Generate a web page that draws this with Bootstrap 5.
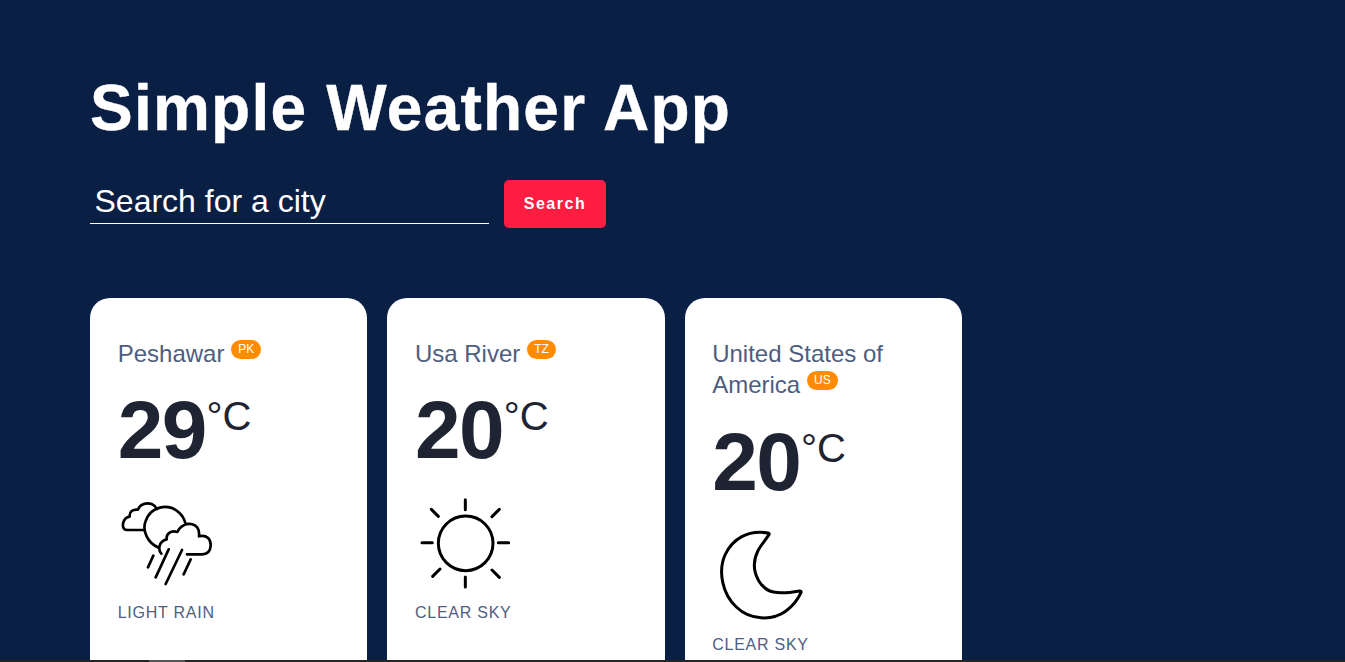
<!DOCTYPE html>
<html lang="en">
<head>
<meta charset="utf-8">
<meta name="viewport" content="width=device-width, initial-scale=1">
<title>Simple Weather App</title>
<link href="https://cdn.jsdelivr.net/npm/bootstrap@5.3.0/dist/css/bootstrap.min.css" rel="stylesheet">
<style>
body{background:#0a1f44;font-family:"Liberation Sans",Arial,sans-serif;line-height:1.3;color:#fff}
.page{width:1169px;margin-left:90px;padding-top:67px}
.heading{font-size:64px;line-height:83px;letter-spacing:1.24px;margin-bottom:30px;-webkit-text-stroke:.4px #fff}
.city-input{width:399px;height:44px;font-size:32px;line-height:36px;padding:3px 4.5px 4px;background:transparent;border:0;border-bottom:1px solid #fff;border-radius:0;color:#fff;outline:0}
.city-input::placeholder{color:#fff;opacity:1}
.search-btn{width:102px;height:48px;padding:0;margin-left:15px;background:#ff1e42;border:0;border-radius:5px;letter-spacing:1.55px;font-size:16px;line-height:18px}
.cities{display:grid;grid-template-columns:repeat(4,1fr);gap:20px;margin-top:70px}
.city{background:#fff;border-radius:20px;padding:40px 27.7px;height:440px}
.city-name{font-size:24px;line-height:31.2px;color:#4e5d80;margin:0}
.city-name sup{display:inline-block;font-size:12px;line-height:14.4px;top:-9px;padding:2.4px 7.2px;border-radius:30px;background:#ff8c00;color:#fff;margin:-10px 0}
.city-temp{font-size:82px;line-height:104px;letter-spacing:-1.5px;font-weight:700;color:#1e2432;margin-top:9px}
.city-temp sup{font-size:40px;font-weight:400;letter-spacing:0;top:-28px;margin-left:.5px}
.city svg{display:block;width:100px;height:100px;margin-top:11px;fill:none;stroke:#000;stroke-width:9;stroke-linecap:round;stroke-linejoin:round}
.city .rain-icon{stroke-width:8}
.city figcaption{font-size:16px;line-height:21px;letter-spacing:.75px;color:#4e5d80;margin-top:9px}
.city-tall .city-temp{margin-top:10px}
.taskbar{height:2px;background:#242424}
.taskbar span{display:block;width:36px;height:2px;margin-left:149px;background:#555}
</style>
</head>
<body class="vh-100 overflow-hidden d-flex flex-column">
<main class="flex-grow-1 overflow-hidden">
<div class="page">
<h1 class="heading fw-bold">Simple Weather App</h1>
<form class="d-flex align-items-start" onsubmit="return false">
<input class="city-input" type="text" placeholder="Search for a city">
<button class="search-btn btn btn-danger fw-bold" type="submit">Search</button>
</form>
<section class="cities">
<article class="city">
<h2 class="city-name fw-normal">Peshawar <sup>PK</sup></h2>
<div class="city-temp">29<sup>°C</sup></div>
<figure class="m-0">
<svg class="rain-icon" viewBox="25 9 300 300"><path d="M104 120H52C38 120 39 104 41 97Q45 83 60 80C58 65 70 57 85 59C91 41 111 37 126 42Q137 47 142 57M147 173C112 158 97 120 108 93C122 50 175 38 207 67Q222 80 227 99M155 191C145 180 146 154 171 148C169 132 183 120 203 126C212 107 232 98 248 103C264 108 270 121 268 139C291 133 304 147 303 167C302 186 293 193 277 193H232M131 197L115 232M177 178L138 262M217 180L168 282M243 208L222 253"/></svg>
<figcaption>LIGHT RAIN</figcaption>
</figure>
</article>
<article class="city">
<h2 class="city-name fw-normal">Usa River <sup>TZ</sup></h2>
<div class="city-temp">20<sup>°C</sup></div>
<figure class="m-0">
<svg viewBox="15 8 300 300"><circle cx="167" cy="159" r="82"/><path d="M166 28V58M166 260V290M36 157H67M265 157H296M64 57L85 78M268 57L246 79M68 258L90 236M246 239L268 261"/></svg>
<figcaption>CLEAR SKY</figcaption>
</figure>
</article>
<article class="city city-tall">
<h2 class="city-name fw-normal"><span class="d-block">United States of</span> <span>America</span> <sup>US</sup></h2>
<div class="city-temp">20<sup>°C</sup></div>
<figure class="m-0">
<svg viewBox="22 15 300 300"><path d="M190 39C128 29 82 58 61 105C39 155 54 224 95 261C136 301 202 303 243 274Q273 252 289 218Q291 213 285 213C216 225 185 220 162 182C146 154 145 122 160 92C168 76 181 62 193 44Q195 40 190 39Z"/></svg>
<figcaption>CLEAR SKY</figcaption>
</figure>
</article>
</section>
</div>
</main>
<footer class="taskbar flex-shrink-0"><span></span></footer>
<script src="https://cdn.jsdelivr.net/npm/bootstrap@5.3.0/dist/js/bootstrap.bundle.min.js"></script>
</body>
</html>
